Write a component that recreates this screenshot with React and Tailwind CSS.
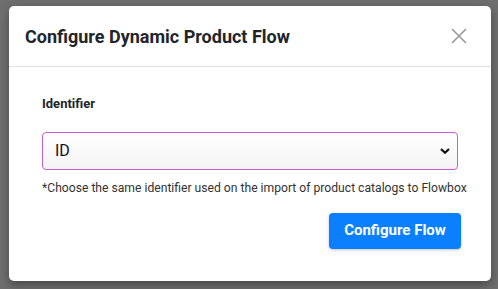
import React, { useState } from 'react';

const ConfigureFlowModal = () => {
  const [identifier, setIdentifier] = useState('ID');

  return (
    <div className="w-[482px] bg-white rounded-[5px] shadow-[0_4px_10px_rgba(0,0,0,0.35)]">
      {/* Header */}
      <div className="h-[61px] flex items-center justify-between pl-[16px] pr-[24px] border-b border-[#dee2e6]">
        <h2 className="text-[18px] font-bold text-[#212529]">
          Configure Dynamic Product Flow
        </h2>
        <button className="text-[#999999]">
          <svg width="16" height="16" viewBox="0 0 16 16" fill="none" stroke="currentColor" strokeWidth="1.6">
            <path d="M1 1 L15 15 M15 1 L1 15" />
          </svg>
        </button>
      </div>

      {/* Body */}
      <div className="pl-[33px] pr-[30px] pt-[27px] pb-[32px]">
        <label className="block text-[13px] font-bold text-[#212529] mb-[18px]">Identifier</label>
        <div className="relative w-[416px]">
          <select
            value={identifier}
            onChange={(e) => setIdentifier(e.target.value)}
            className="appearance-none w-full h-[38px] pl-[12px] pr-8 text-[16px] text-[#111] border-[1.5px] border-[#c75dd0] rounded-[4px] bg-gradient-to-b from-white to-[#f4f4f4] outline-none"
          >
            <option>ID</option>
            <option>SKU</option>
            <option>GTIN</option>
          </select>
          <span className="pointer-events-none absolute right-[8px] top-1/2 -translate-y-1/2 text-[#111]">
            <svg width="10" height="7" viewBox="0 0 10 7" fill="none" stroke="currentColor" strokeWidth="2.2">
              <path d="M1 1.5 L5 5.3 L9 1.5" />
            </svg>
          </span>
        </div>
        <p className="mt-[9px] text-[12.15px] text-[#333] whitespace-nowrap">
          *Choose the same identifier used on the import of product catalogs to Flowbox
        </p>
        <div className="flex justify-end mt-[16px]">
          <button className="h-[36px] w-[132px] rounded-[4px] bg-[#0a80ff] text-white text-[15px] font-bold shadow-[0_1px_3px_rgba(0,0,0,0.25)]">
            Configure Flow
          </button>
        </div>
      </div>
    </div>
  );
};

export default function App() {
  return (
    <div
      className="w-[498px] h-[289px] bg-[#6e6e6e] pt-[6px] pl-[9px] overflow-hidden"
      style={{ fontFamily: 'Roboto, "Liberation Sans", sans-serif' }}
    >
      <ConfigureFlowModal />
    </div>
  );
}
